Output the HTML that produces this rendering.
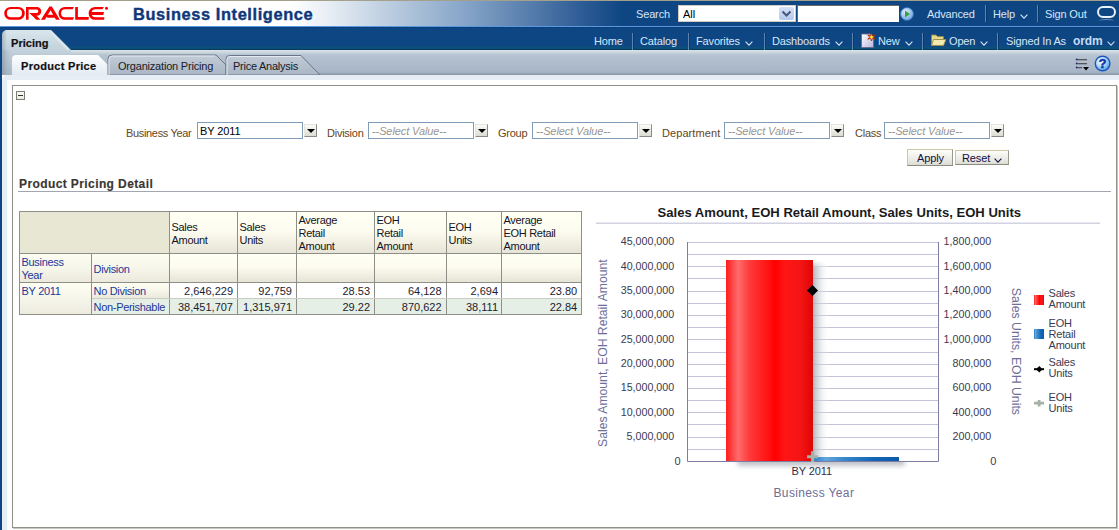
<!DOCTYPE html>
<html><head><meta charset="utf-8">
<style>
*{margin:0;padding:0;box-sizing:border-box}
html,body{width:1119px;height:530px;overflow:hidden;background:#fff;font-family:"Liberation Sans",sans-serif;font-size:11px;position:relative}
.a{position:absolute;white-space:nowrap;line-height:1}
#topline{left:0;top:0;width:1119px;height:1px;background:#a4a08c}
#hdr{left:0;top:1px;width:1119px;height:25px;background:linear-gradient(to right,#fff 0px,#fff 290px,#e6edf4 330px,#b4c7dc 400px,#86a5c8 465px,#5a80ae 525px,#2f5d96 580px,#0e4683 622px,#0e4683 1119px)}
#hline{left:0;top:26px;width:1119px;height:1px;background:#5b9ae0}
#nav{left:0;top:27px;width:1119px;height:23px;background:linear-gradient(to bottom,#0a3c74 0,#0e4683 1.5px,#0e4683 19px,#0b4f7c 20px,#0a4d76 22px,#083b62 22px,#083a60 23px)}
#tabbar{left:0;top:50px;width:1119px;height:25px;background:linear-gradient(to bottom,#dde5ea 0,#c6d2dc 3px,#b6c3d0 5px,#b0bdcc 12px,#a9b6c8 21px,#a2afc0 23px,#8e9aaa 24px,#8e9aaa 25px)}
#lstrip{left:0;top:27px;width:2px;height:503px;background:#0e4683}
#panel{left:2px;top:75px;width:1117px;height:455px;background:#e6edf5;border-top-left-radius:5px}
#inner{left:7px;top:80px;width:1112px;height:450px;background:#fff}
#box{left:12px;top:85px;width:1105px;height:443px;border:1px solid #8f9088;box-shadow:1px 1px 0 #c8c8c0}
.hl{color:#d6e6f7;font-size:11px;letter-spacing:-0.15px}
.sep{width:1px;background:#5d84b0;box-shadow:1px 0 0 #0a3a6a}
.cv{display:inline-block;vertical-align:baseline;margin-left:5px;position:relative;top:0.5px}
.chev{display:inline-block;width:4px;height:4px;border-right:1.5px solid currentColor;border-bottom:1.5px solid currentColor;transform:rotate(45deg);margin-left:7px;position:relative;top:-2px}
</style></head><body>
<div class="a" id="topline"></div>
<div class="a" id="hdr"></div>
<div class="a" id="hline"></div>
<div class="a" id="nav"></div>
<div class="a" id="tabbar"></div>
<div class="a" id="lstrip"></div>
<div class="a" id="panel"></div>
<div class="a" id="inner"></div>
<div class="a" id="box"></div>

<!-- ORACLE logo -->
<svg class="a" style="left:0;top:0" width="120" height="26" viewBox="0 0 120 26">
 <g fill="#f80000">
  <path fill-rule="evenodd" d="M10.65 6.9H18.35A6.45 6.45 0 0 1 18.35 19.8H10.65A6.45 6.45 0 0 1 10.65 6.9ZM10.98 9.1H17.93A4.07 4.07 0 0 1 17.93 17.25H10.98A4.07 4.07 0 0 1 10.98 9.1Z"/>
  <path fill-rule="evenodd" d="M26 6.9H36.85A4.45 4.45 0 0 1 36.85 15.8H32.4L29.7 12.9H28.6V19.8H26ZM28.6 9.4H36.65A1.75 1.75 0 0 1 36.65 12.9H28.6Z"/>
  <path d="M29.7 12.9H34L40.5 19.8H36.2Z"/>
  <path d="M40.9 19.8L49.4 6.6H51.8L59.9 19.8H56L50.6 10.3L44.9 19.8Z"/>
  <path d="M48.1 14.7H54.3L56.1 17.8H48.1A1.55 1.55 0 0 1 48.1 14.7Z"/>
  <path d="M74 6.9H64.95A6.45 6.45 0 0 0 64.95 19.8H73L74 17.25H65.08A3.97 3.97 0 0 1 65.08 9.3H72.6Z"/>
  <path d="M75.2 6.9H77.9V17.1H88.9L88.6 19.8H75.2Z"/>
  <path d="M103.9 6.9H95.05A6.45 6.45 0 0 0 95.05 19.8H104.1L104.4 17.25H95.5A3.97 3.97 0 0 1 95.5 9.3H102.4Z"/>
  <path d="M91 12H104L103.3 14.9H91Z"/>
  <circle cx="106.5" cy="8.25" r="1.5"/>
 </g>
</svg>
<div class="a" style="left:133px;top:6px;font-size:16.4px;font-weight:bold;color:#0f377a;letter-spacing:0.6px;-webkit-text-stroke:0.4px #0f377a">Business Intelligence</div>

<!-- search row -->
<div class="a hl" style="left:636px;top:9px">Search</div>
<div class="a" style="left:678px;top:5px;width:118px;height:17px;background:#fff;border:1px solid #cfcbbf"></div>
<div class="a" style="left:683px;top:9px;color:#000">All</div>
<div class="a" style="left:779px;top:7px;width:15px;height:13px;background:linear-gradient(#d4e0f6,#b6c8ec);border-radius:2px"></div>
<svg class="a" style="left:781px;top:9px" width="11" height="9"><path d="M1.5 2.5L5.5 6.5L9.5 2.5" fill="none" stroke="#485878" stroke-width="2"/></svg>
<div class="a" style="left:797px;top:5px;width:102px;height:17px;background:#fff;border-top:1px solid #6a6a6a;border-left:1px solid #6a6a6a"></div>
<svg class="a" style="left:900px;top:7px" width="15" height="14"><defs><radialGradient id="gb" cx="40%" cy="35%" r="70%"><stop offset="0" stop-color="#e6f3fd"/><stop offset="1" stop-color="#5e9edc"/></radialGradient></defs><circle cx="7" cy="7" r="6.5" fill="url(#gb)" stroke="#2e6bb5" stroke-width="0.8"/><path d="M5 3.5L10 7L5 10.5Z" fill="#3aa040"/></svg>
<div class="a hl" style="left:927px;top:9px">Advanced</div>
<div class="a sep" style="left:985px;top:5px;height:17px"></div>
<div class="a hl" style="left:993px;top:9px">Help<svg class="cv" width="8" height="5" viewBox="0 0 8 5"><path d="M0.6 0.7L4 4.1L7.4 0.7" fill="none" stroke="currentColor" stroke-width="1.1"/></svg></div>
<div class="a sep" style="left:1037px;top:5px;height:17px"></div>
<div class="a hl" style="left:1045px;top:9px">Sign Out</div>
<div class="a" style="left:1097px;top:6px;width:19px;height:12px;border:2px solid #e8f0fa;border-radius:6px"></div>
<div class="a" style="left:1099px;top:19px;width:15px;height:4px;border-top:1px solid rgba(200,220,240,0.5);border-radius:50%"></div>

<!-- nav row -->
<div class="a hl" style="left:594px;top:36px">Home</div>
<div class="a sep" style="left:632px;top:33px;height:17px"></div>
<div class="a hl" style="left:640px;top:36px">Catalog</div>
<div class="a sep" style="left:688px;top:33px;height:17px"></div>
<div class="a hl" style="left:696px;top:36px">Favorites<svg class="cv" width="8" height="5" viewBox="0 0 8 5"><path d="M0.6 0.7L4 4.1L7.4 0.7" fill="none" stroke="currentColor" stroke-width="1.1"/></svg></div>
<div class="a sep" style="left:764px;top:33px;height:17px"></div>
<div class="a hl" style="left:772px;top:36px">Dashboards<svg class="cv" width="8" height="5" viewBox="0 0 8 5"><path d="M0.6 0.7L4 4.1L7.4 0.7" fill="none" stroke="currentColor" stroke-width="1.1"/></svg></div>
<div class="a sep" style="left:852px;top:33px;height:17px"></div>
<svg class="a" style="left:860px;top:32px" width="17" height="17" viewBox="0 0 17 17"><defs><linearGradient id="pg" x1="0" y1="0" x2="1" y2="1"><stop offset="0" stop-color="#ffffff"/><stop offset="1" stop-color="#b8b4dc"/></linearGradient></defs><path d="M1.5 2H10.5L13.5 5V15.5H1.5Z" fill="url(#pg)" stroke="#6a6890" stroke-width="0.9"/><path d="M11.5 1.2L12.4 3.9L15.2 3L13.3 5.1L15.2 7.2L12.4 6.3L11.5 9L10.6 6.3L7.8 7.2L9.7 5.1L7.8 3L10.6 3.9Z" fill="#ffe040" stroke="#b02800" stroke-width="0.9" stroke-linejoin="round"/></svg>
<div class="a hl" style="left:878px;top:36px">New<svg class="cv" width="8" height="5" viewBox="0 0 8 5"><path d="M0.6 0.7L4 4.1L7.4 0.7" fill="none" stroke="currentColor" stroke-width="1.1"/></svg></div>
<div class="a sep" style="left:922px;top:33px;height:17px"></div>
<svg class="a" style="left:930px;top:33px" width="17" height="14"><path d="M1.5 2H6L7.5 3.5H13.5V12.5H1.5Z" fill="#e4d890" stroke="#9a8840" stroke-width="0.9"/><path d="M3.5 6.5H16L13.5 12.5H1.5Z" fill="#f2eab0" stroke="#9a8840" stroke-width="0.9"/></svg>
<div class="a hl" style="left:949px;top:36px">Open<svg class="cv" width="8" height="5" viewBox="0 0 8 5"><path d="M0.6 0.7L4 4.1L7.4 0.7" fill="none" stroke="currentColor" stroke-width="1.1"/></svg></div>
<div class="a sep" style="left:997px;top:33px;height:17px"></div>
<div class="a hl" style="left:1006px;top:36px">Signed In As</div>
<div class="a hl" style="left:1073px;top:35px;font-weight:bold;font-size:12px;color:#c6dcf2">ordm<svg class="cv" width="8" height="5" viewBox="0 0 8 5"><path d="M0.6 0.7L4 4.1L7.4 0.7" fill="none" stroke="currentColor" stroke-width="1.1"/></svg></div>


<!-- tabs -->
<svg class="a" style="left:0;top:26px" width="1119" height="49" viewBox="0 26 1119 49">
 <defs>
  <linearGradient id="tg1" x1="0" y1="0" x2="0" y2="1"><stop offset="0" stop-color="#dae6ec"/><stop offset="0.3" stop-color="#c9d8e0"/><stop offset="0.6" stop-color="#bccbd6"/><stop offset="1" stop-color="#aab9c6"/></linearGradient>
  <linearGradient id="tg2" x1="0" y1="0" x2="0" y2="1"><stop offset="0" stop-color="#ffffff"/><stop offset="0.5" stop-color="#f0f4f8"/><stop offset="1" stop-color="#e3eaf3"/></linearGradient>
  <linearGradient id="tg3" x1="0" y1="0" x2="0" y2="1"><stop offset="0" stop-color="#c2ccd8"/><stop offset="1" stop-color="#aab6c4"/></linearGradient>
 </defs>
 <path d="M2 75V35A5 5 0 0 1 7 30H51L71 50V54.5H12V75Z" fill="url(#tg1)"/><path d="M50.5 31.5L68.5 50" stroke="#e2eaee" stroke-width="2.5" opacity="0.75"/>
 <linearGradient id="lsh" x1="0" y1="0" x2="1" y2="0"><stop offset="0" stop-color="#8898a8" stop-opacity="0.55"/><stop offset="1" stop-color="#8898a8" stop-opacity="0"/></linearGradient><path d="M2 75V35A5 5 0 0 1 7 30V75Z" fill="url(#lsh)"/><rect x="2" y="50" width="10" height="25" fill="url(#lsh)" opacity="0.6"/>
 <path d="M12 75V59A4 4 0 0 1 16 55H98L118 75Z" fill="url(#tg2)"/>
 <path d="M108 75V59A4 4 0 0 1 112 55H216L226 65V75Z" fill="url(#tg3)" stroke="#6b7787" stroke-width="1"/>
 <path d="M109 75V59.5A3.5 3.5 0 0 1 112.5 56H215" fill="none" stroke="#e4eaf0" stroke-width="1"/>
 <path d="M226 75V59A3.5 3.5 0 0 1 229.5 55.5H301L320 75Z" fill="url(#tg3)" stroke="#6b7787" stroke-width="1"/>
 <path d="M227 75V59.5A3 3 0 0 1 230 56.5H300.5" fill="none" stroke="#e4eaf0" stroke-width="1"/>
</svg>
<div class="a" style="left:11px;top:38px;font-size:11px;font-weight:bold;color:#111;letter-spacing:0.05px;-webkit-text-stroke:0.2px #111">Pricing</div>
<div class="a" style="left:21px;top:61px;font-size:11px;font-weight:bold;color:#111;letter-spacing:0.3px;-webkit-text-stroke:0.2px #111">Product Price</div>
<div class="a" style="left:118px;top:61px;font-size:11px;color:#1a1a28;letter-spacing:-0.2px">Organization Pricing</div>
<div class="a" style="left:233px;top:61px;font-size:11px;color:#1a1a28;letter-spacing:-0.25px">Price Analysis</div>
<svg class="a" style="left:1075px;top:57px" width="16" height="15"><g fill="#333"><rect x="3" y="2" width="9" height="1.3" fill="#555"/><rect x="3" y="6" width="9" height="1.3" fill="#555"/><rect x="3" y="10" width="4" height="1.3" fill="#555"/></g><circle cx="1.8" cy="2.5" r="1.1" fill="#2a2a80"/><circle cx="1.8" cy="6.5" r="1.1" fill="#2a2a80"/><circle cx="1.8" cy="10.5" r="1.1" fill="#2a2a80"/><path d="M8 10H14L11 13.5Z" fill="#000"/></svg>
<svg class="a" style="left:1094px;top:55px" width="18" height="18"><defs><radialGradient id="hg" cx="40%" cy="35%" r="70%"><stop offset="0" stop-color="#f6fbff"/><stop offset="0.45" stop-color="#c0e0fa"/><stop offset="1" stop-color="#3f8fe0"/></radialGradient></defs><circle cx="8.6" cy="8.5" r="7.3" fill="url(#hg)" stroke="#1a58c0" stroke-width="1.4"/><text x="8.6" y="12.9" text-anchor="middle" font-family="Liberation Sans" font-weight="bold" font-size="12.5" fill="#0a3aa8" stroke="#0a3aa8" stroke-width="0.6">?</text></svg>

<!-- content -->
<div class="a" style="left:16px;top:91px;width:9px;height:9px;border:1px solid #7c7c74;background:linear-gradient(#fafaf4,#ecece2)"></div>
<div class="a" style="left:18px;top:95px;width:5px;height:1px;background:#333"></div>

<style>
.pl{color:#65451a;letter-spacing:-0.25px}
.pin{height:17px;border:1px solid #7f9db9;background:#fff}
.pv{color:#9a9590;font-style:italic;letter-spacing:-0.1px}
.dd{width:13px;height:13px;background:linear-gradient(#fbfbf8,#dcdcd4);border:1px solid;border-color:#e6e6e0 #8a8a84 #8a8a84 #e6e6e0}
.dd:after{content:"";position:absolute;left:1.5px;top:3.5px;border-left:4px solid transparent;border-right:4px solid transparent;border-top:4.5px solid #000}
.btn{border:1px solid;border-color:#cbc7a6 #9a9a8a #8a8a7e #cbc7a6;background:linear-gradient(#fdfdfa,#e9e9e2 70%,#dcdcd4)}
</style>
<div class="a pl" style="left:126px;top:128px;letter-spacing:-0.33px">Business Year</div>
<div class="a pin" style="left:197px;top:122px;width:106px"></div>
<div class="a" style="left:200px;top:126px;color:#000;letter-spacing:-0.1px">BY 2011</div>
<div class="a dd" style="left:304px;top:124px"></div>

<div class="a pl" style="left:327px;top:128px">Division</div>
<div class="a pin" style="left:368px;top:122px;width:106px"></div>
<div class="a pv" style="left:372px;top:126px">--Select Value--</div>
<div class="a dd" style="left:475px;top:124px"></div>

<div class="a pl" style="left:498px;top:128px">Group</div>
<div class="a pin" style="left:532px;top:122px;width:106px"></div>
<div class="a pv" style="left:536px;top:126px">--Select Value--</div>
<div class="a dd" style="left:639px;top:124px"></div>

<div class="a pl" style="left:662px;top:128px;letter-spacing:0.08px">Department</div>
<div class="a pin" style="left:724px;top:122px;width:106px"></div>
<div class="a pv" style="left:728px;top:126px">--Select Value--</div>
<div class="a dd" style="left:831px;top:124px"></div>

<div class="a pl" style="left:855px;top:128px">Class</div>
<div class="a pin" style="left:884px;top:122px;width:106px"></div>
<div class="a pv" style="left:888px;top:126px">--Select Value--</div>
<div class="a dd" style="left:991px;top:124px"></div>

<div class="a btn" style="left:907px;top:149px;width:46px;height:17px"></div>
<div class="a" style="left:917px;top:153px;color:#10104a;letter-spacing:-0.1px">Apply</div>
<div class="a btn" style="left:955px;top:150px;width:54px;height:15px"></div>
<div class="a" style="left:962px;top:153px;color:#10104a;letter-spacing:-0.1px">Reset<svg class="cv" width="8" height="5" viewBox="0 0 8 5" style="margin-left:4px"><path d="M0.6 0.7L4 4.1L7.4 0.7" fill="none" stroke="currentColor" stroke-width="1.1"/></svg></div>

<div class="a" style="left:19px;top:178px;font-size:12px;font-weight:bold;color:#3a3632;letter-spacing:0.4px;-webkit-text-stroke:0.15px #3a3632">Product Pricing Detail</div>
<div class="a" style="left:18px;top:191px;width:1093px;height:1px;background:#a2a6b2"></div>

<!-- table -->
<style>.tx{color:#141424;letter-spacing:-0.3px}.rh{color:#1c3898;letter-spacing:-0.3px}.nm{color:#1c1c30;text-align:right}</style>
<div class="a" style="left:19px;top:211px;width:563px;height:104px;background:#8e9088"></div>
<div class="a" style="left:20px;top:212px;width:149px;height:41px;background:#e8e7d4"></div>
<div class="a" style="left:170px;top:212px;width:67px;height:41px;background:linear-gradient(#fffff3 0%,#fdfcf0 45%,#f1efe2 75%,#e6e4d6 100%)"></div>
<div class="a" style="left:238px;top:212px;width:58px;height:41px;background:linear-gradient(#fffff3 0%,#fdfcf0 45%,#f1efe2 75%,#e6e4d6 100%)"></div>
<div class="a" style="left:297px;top:212px;width:77px;height:41px;background:linear-gradient(#fffff3 0%,#fdfcf0 45%,#f1efe2 75%,#e6e4d6 100%)"></div>
<div class="a" style="left:375px;top:212px;width:71px;height:41px;background:linear-gradient(#fffff3 0%,#fdfcf0 45%,#f1efe2 75%,#e6e4d6 100%)"></div>
<div class="a" style="left:447px;top:212px;width:54px;height:41px;background:linear-gradient(#fffff3 0%,#fdfcf0 45%,#f1efe2 75%,#e6e4d6 100%)"></div>
<div class="a" style="left:502px;top:212px;width:79px;height:41px;background:linear-gradient(#fffff3 0%,#fdfcf0 45%,#f1efe2 75%,#e6e4d6 100%)"></div>
<div class="a" style="left:20px;top:254px;width:71px;height:28px;background:linear-gradient(#fdfdf2 0%,#f7f6ea 50%,#ebe9dc 100%)"></div>
<div class="a" style="left:92px;top:254px;width:77px;height:28px;background:linear-gradient(#fdfdf2 0%,#f7f6ea 50%,#ebe9dc 100%)"></div>
<div class="a" style="left:170px;top:254px;width:67px;height:28px;background:linear-gradient(#fffff3 0%,#fdfcf0 45%,#f1efe2 75%,#e6e4d6 100%)"></div>
<div class="a" style="left:238px;top:254px;width:58px;height:28px;background:linear-gradient(#fffff3 0%,#fdfcf0 45%,#f1efe2 75%,#e6e4d6 100%)"></div>
<div class="a" style="left:297px;top:254px;width:77px;height:28px;background:linear-gradient(#fffff3 0%,#fdfcf0 45%,#f1efe2 75%,#e6e4d6 100%)"></div>
<div class="a" style="left:375px;top:254px;width:71px;height:28px;background:linear-gradient(#fffff3 0%,#fdfcf0 45%,#f1efe2 75%,#e6e4d6 100%)"></div>
<div class="a" style="left:447px;top:254px;width:54px;height:28px;background:linear-gradient(#fffff3 0%,#fdfcf0 45%,#f1efe2 75%,#e6e4d6 100%)"></div>
<div class="a" style="left:502px;top:254px;width:79px;height:28px;background:linear-gradient(#fffff3 0%,#fdfcf0 45%,#f1efe2 75%,#e6e4d6 100%)"></div>
<div class="a" style="left:20px;top:283px;width:71px;height:31px;background:linear-gradient(#fdfdf2 0%,#f8f7ec 40%,#ecebde 100%)"></div>
<div class="a" style="left:92px;top:283px;width:77px;height:15px;background:linear-gradient(#fdfdf2 0%,#f7f6ea 50%,#ebe9dc 100%)"></div>
<div class="a" style="left:92px;top:298px;width:77px;height:16px;background:#c9cdc4"></div>
<div class="a" style="left:92px;top:299px;width:77px;height:15px;background:#e6efe6"></div>
<div class="a" style="left:170px;top:283px;width:67px;height:15px;background:#ffffff"></div>
<div class="a" style="left:169px;top:298px;width:68px;height:1px;background:#c9cdc4"></div>
<div class="a" style="left:170px;top:299px;width:67px;height:15px;background:#e6efe6"></div>
<div class="a" style="left:238px;top:283px;width:58px;height:15px;background:#ffffff"></div>
<div class="a" style="left:237px;top:298px;width:59px;height:1px;background:#c9cdc4"></div>
<div class="a" style="left:238px;top:299px;width:58px;height:15px;background:#e6efe6"></div>
<div class="a" style="left:297px;top:283px;width:77px;height:15px;background:#ffffff"></div>
<div class="a" style="left:296px;top:298px;width:78px;height:1px;background:#c9cdc4"></div>
<div class="a" style="left:297px;top:299px;width:77px;height:15px;background:#e6efe6"></div>
<div class="a" style="left:375px;top:283px;width:71px;height:15px;background:#ffffff"></div>
<div class="a" style="left:374px;top:298px;width:72px;height:1px;background:#c9cdc4"></div>
<div class="a" style="left:375px;top:299px;width:71px;height:15px;background:#e6efe6"></div>
<div class="a" style="left:447px;top:283px;width:54px;height:15px;background:#ffffff"></div>
<div class="a" style="left:446px;top:298px;width:55px;height:1px;background:#c9cdc4"></div>
<div class="a" style="left:447px;top:299px;width:54px;height:15px;background:#e6efe6"></div>
<div class="a" style="left:502px;top:283px;width:79px;height:15px;background:#ffffff"></div>
<div class="a" style="left:501px;top:298px;width:80px;height:1px;background:#c9cdc4"></div>
<div class="a" style="left:502px;top:299px;width:79px;height:15px;background:#e6efe6"></div>
<div class="a tx" style="left:171.5px;top:221.7px;">Sales</div>
<div class="a tx" style="left:171.5px;top:234.7px;">Amount</div>
<div class="a tx" style="left:239.5px;top:221.7px;">Sales</div>
<div class="a tx" style="left:239.5px;top:234.7px;">Units</div>
<div class="a tx" style="left:298.5px;top:214.7px;">Average</div>
<div class="a tx" style="left:298.5px;top:227.7px;">Retail</div>
<div class="a tx" style="left:298.5px;top:240.7px;">Amount</div>
<div class="a tx" style="left:376.5px;top:214.7px;">EOH</div>
<div class="a tx" style="left:376.5px;top:227.7px;">Retail</div>
<div class="a tx" style="left:376.5px;top:240.7px;">Amount</div>
<div class="a tx" style="left:448.5px;top:221.7px;">EOH</div>
<div class="a tx" style="left:448.5px;top:234.7px;">Units</div>
<div class="a tx" style="left:503.5px;top:214.7px;">Average</div>
<div class="a tx" style="left:503.5px;top:227.7px;">EOH Retail</div>
<div class="a tx" style="left:503.5px;top:240.7px;">Amount</div>
<div class="a rh" style="left:21.5px;top:256.7px;">Business</div>
<div class="a rh" style="left:21.5px;top:269.7px;">Year</div>
<div class="a rh" style="left:93.5px;top:263.7px;">Division</div>
<div class="a rh" style="left:21.5px;top:286.2px;">BY 2011</div>
<div class="a rh" style="left:93.5px;top:286.2px;">No Division</div>
<div class="a rh" style="left:93.5px;top:301.7px;">Non-Perishable</div>
<div class="a nm" style="left:153.0px;top:286.2px;width:80px">2,646,229</div>
<div class="a nm" style="left:153.0px;top:301.7px;width:80px">38,451,707</div>
<div class="a nm" style="left:212.0px;top:286.2px;width:80px">92,759</div>
<div class="a nm" style="left:212.0px;top:301.7px;width:80px">1,315,971</div>
<div class="a nm" style="left:290.0px;top:286.2px;width:80px">28.53</div>
<div class="a nm" style="left:290.0px;top:301.7px;width:80px">29.22</div>
<div class="a nm" style="left:361.6px;top:286.2px;width:80px">64,128</div>
<div class="a nm" style="left:361.6px;top:301.7px;width:80px">870,622</div>
<div class="a nm" style="left:418.0px;top:286.2px;width:80px">2,694</div>
<div class="a nm" style="left:418.0px;top:301.7px;width:80px">38,111</div>
<div class="a nm" style="left:497.2px;top:286.2px;width:80px">23.80</div>
<div class="a nm" style="left:497.2px;top:301.7px;width:80px">22.84</div>
<!-- chart -->
<svg class="a" style="left:590px;top:195px" width="529" height="320" viewBox="590 195 529 320">
<defs>
<linearGradient id="red" x1="0" y1="0" x2="1" y2="0">
 <stop offset="0" stop-color="#ff1c1c"/><stop offset="0.14" stop-color="#ff6c6c"/><stop offset="0.27" stop-color="#ff3a3a"/><stop offset="0.5" stop-color="#ff1010"/><stop offset="0.56" stop-color="#ff0000"/><stop offset="0.68" stop-color="#ff1616"/><stop offset="0.86" stop-color="#f41414"/><stop offset="1" stop-color="#de0606"/>
</linearGradient>
<linearGradient id="blue" x1="0" y1="0" x2="1" y2="0">
 <stop offset="0" stop-color="#2a7cc8"/><stop offset="0.15" stop-color="#62a6dc"/><stop offset="0.35" stop-color="#3a88cc"/><stop offset="0.7" stop-color="#1466b4"/><stop offset="1" stop-color="#0c5aa8"/>
</linearGradient>
<linearGradient id="shr" x1="0" y1="0" x2="1" y2="0"><stop offset="0" stop-color="#9ca2ac" stop-opacity="0.75"/><stop offset="0.5" stop-color="#c0c4cc" stop-opacity="0.45"/><stop offset="1" stop-color="#ffffff" stop-opacity="0"/></linearGradient>
<linearGradient id="shb" x1="0" y1="0" x2="0" y2="1"><stop offset="0" stop-color="#9ca2ac" stop-opacity="0.7"/><stop offset="0.5" stop-color="#c0c4cc" stop-opacity="0.4"/><stop offset="1" stop-color="#ffffff" stop-opacity="0"/></linearGradient>
<filter id="blur2" x="-20%" y="-100%" width="140%" height="300%"><feGaussianBlur stdDeviation="2.6"/></filter>
</defs>
<text x="839.3" y="216.7" text-anchor="middle" font-family="Liberation Sans" font-weight="bold" font-size="13" fill="#1a1a1a" textLength="363.5" lengthAdjust="spacingAndGlyphs">Sales Amount, EOH Retail Amount, Sales Units, EOH Units</text>
<rect x="596" y="222.5" width="504" height="1.5" fill="#d2d2e2"/>
<line x1="688" y1="242.5" x2="938" y2="242.5" stroke="#c2c3d8" stroke-width="1"/>
<line x1="688" y1="254.5" x2="938" y2="254.5" stroke="#c2c3d8" stroke-width="1"/>
<line x1="688" y1="266.5" x2="938" y2="266.5" stroke="#c2c3d8" stroke-width="1"/>
<line x1="688" y1="278.5" x2="938" y2="278.5" stroke="#c2c3d8" stroke-width="1"/>
<line x1="688" y1="291.5" x2="938" y2="291.5" stroke="#c2c3d8" stroke-width="1"/>
<line x1="688" y1="303.5" x2="938" y2="303.5" stroke="#c2c3d8" stroke-width="1"/>
<line x1="688" y1="315.5" x2="938" y2="315.5" stroke="#c2c3d8" stroke-width="1"/>
<line x1="688" y1="327.5" x2="938" y2="327.5" stroke="#c2c3d8" stroke-width="1"/>
<line x1="688" y1="339.5" x2="938" y2="339.5" stroke="#c2c3d8" stroke-width="1"/>
<line x1="688" y1="352.5" x2="938" y2="352.5" stroke="#c2c3d8" stroke-width="1"/>
<line x1="688" y1="364.5" x2="938" y2="364.5" stroke="#c2c3d8" stroke-width="1"/>
<line x1="688" y1="376.5" x2="938" y2="376.5" stroke="#c2c3d8" stroke-width="1"/>
<line x1="688" y1="388.5" x2="938" y2="388.5" stroke="#c2c3d8" stroke-width="1"/>
<line x1="688" y1="400.5" x2="938" y2="400.5" stroke="#c2c3d8" stroke-width="1"/>
<line x1="688" y1="412.5" x2="938" y2="412.5" stroke="#c2c3d8" stroke-width="1"/>
<line x1="688" y1="424.5" x2="938" y2="424.5" stroke="#c2c3d8" stroke-width="1"/>
<line x1="688" y1="437.5" x2="938" y2="437.5" stroke="#c2c3d8" stroke-width="1"/>
<line x1="688" y1="449.5" x2="938" y2="449.5" stroke="#c2c3d8" stroke-width="1"/>
<line x1="688" y1="461.5" x2="938" y2="461.5" stroke="#c2c3d8" stroke-width="1"/>
<linearGradient id="shr2" x1="0" y1="0" x2="1" y2="0"><stop offset="0" stop-color="#a8adb5" stop-opacity="0.85"/><stop offset="0.35" stop-color="#c4c8ce" stop-opacity="0.6"/><stop offset="1" stop-color="#ffffff" stop-opacity="0"/></linearGradient>
<linearGradient id="shv" x1="0" y1="0" x2="0" y2="1"><stop offset="0" stop-color="#fff" stop-opacity="1"/><stop offset="1" stop-color="#fff" stop-opacity="0"/></linearGradient>
<linearGradient id="shb2" x1="0" y1="0" x2="0" y2="1"><stop offset="0" stop-color="#b4b8c0" stop-opacity="0.8"/><stop offset="0.4" stop-color="#ccd0d6" stop-opacity="0.5"/><stop offset="1" stop-color="#ffffff" stop-opacity="0"/></linearGradient>
<rect x="813" y="261" width="16" height="200" fill="url(#shr2)"/>
<rect x="813" y="260" width="16" height="8" fill="url(#shv)"/>
<clipPath id="cpb"><rect x="600" y="461.5" width="400" height="20"/></clipPath><g clip-path="url(#cpb)"><rect x="737" y="457" width="168" height="9" rx="4" fill="#8c939c" opacity="0.55" filter="url(#blur2)"/></g>
<rect x="726" y="260" width="87" height="201" fill="url(#red)"/>
<rect x="813" y="457" width="86" height="4" fill="url(#blue)"/>
<path d="M687.5 242V461.5H938.5V242" fill="none" stroke="#7c7ca4" stroke-width="1"/>
<path d="M812.5 285L818 290.5L812.5 296L807 290.5Z" fill="#000"/>
<path d="M811 451.2H814.2V455.2H818V458.2H814.2V462H811V458.2H807V455.2H811Z" fill="#a4b2a8"/>
<text x="674.2" y="245.4" text-anchor="end" font-family="Liberation Sans" font-size="11" fill="#3a3a52" textLength="53.5" lengthAdjust="spacingAndGlyphs">45,000,000</text>
<text x="991.2" y="245.4" text-anchor="end" font-family="Liberation Sans" font-size="11" fill="#3a3a52" textLength="47.6" lengthAdjust="spacingAndGlyphs">1,800,000</text>
<text x="674.2" y="269.7" text-anchor="end" font-family="Liberation Sans" font-size="11" fill="#3a3a52" textLength="53.5" lengthAdjust="spacingAndGlyphs">40,000,000</text>
<text x="991.2" y="269.7" text-anchor="end" font-family="Liberation Sans" font-size="11" fill="#3a3a52" textLength="47.6" lengthAdjust="spacingAndGlyphs">1,600,000</text>
<text x="674.2" y="294.1" text-anchor="end" font-family="Liberation Sans" font-size="11" fill="#3a3a52" textLength="53.5" lengthAdjust="spacingAndGlyphs">35,000,000</text>
<text x="991.2" y="294.1" text-anchor="end" font-family="Liberation Sans" font-size="11" fill="#3a3a52" textLength="47.6" lengthAdjust="spacingAndGlyphs">1,400,000</text>
<text x="674.2" y="318.4" text-anchor="end" font-family="Liberation Sans" font-size="11" fill="#3a3a52" textLength="53.5" lengthAdjust="spacingAndGlyphs">30,000,000</text>
<text x="991.2" y="318.4" text-anchor="end" font-family="Liberation Sans" font-size="11" fill="#3a3a52" textLength="47.6" lengthAdjust="spacingAndGlyphs">1,200,000</text>
<text x="674.2" y="342.7" text-anchor="end" font-family="Liberation Sans" font-size="11" fill="#3a3a52" textLength="53.5" lengthAdjust="spacingAndGlyphs">25,000,000</text>
<text x="991.2" y="342.7" text-anchor="end" font-family="Liberation Sans" font-size="11" fill="#3a3a52" textLength="47.6" lengthAdjust="spacingAndGlyphs">1,000,000</text>
<text x="674.2" y="367.1" text-anchor="end" font-family="Liberation Sans" font-size="11" fill="#3a3a52" textLength="53.5" lengthAdjust="spacingAndGlyphs">20,000,000</text>
<text x="991.2" y="367.1" text-anchor="end" font-family="Liberation Sans" font-size="11" fill="#3a3a52" textLength="38.7" lengthAdjust="spacingAndGlyphs">800,000</text>
<text x="674.2" y="391.4" text-anchor="end" font-family="Liberation Sans" font-size="11" fill="#3a3a52" textLength="53.5" lengthAdjust="spacingAndGlyphs">15,000,000</text>
<text x="991.2" y="391.4" text-anchor="end" font-family="Liberation Sans" font-size="11" fill="#3a3a52" textLength="38.7" lengthAdjust="spacingAndGlyphs">600,000</text>
<text x="674.2" y="415.7" text-anchor="end" font-family="Liberation Sans" font-size="11" fill="#3a3a52" textLength="53.5" lengthAdjust="spacingAndGlyphs">10,000,000</text>
<text x="991.2" y="415.7" text-anchor="end" font-family="Liberation Sans" font-size="11" fill="#3a3a52" textLength="38.7" lengthAdjust="spacingAndGlyphs">400,000</text>
<text x="674.2" y="440.1" text-anchor="end" font-family="Liberation Sans" font-size="11" fill="#3a3a52" textLength="47.6" lengthAdjust="spacingAndGlyphs">5,000,000</text>
<text x="991.2" y="440.1" text-anchor="end" font-family="Liberation Sans" font-size="11" fill="#3a3a52" textLength="38.7" lengthAdjust="spacingAndGlyphs">200,000</text>
<text x="680.5" y="464.6" text-anchor="end" font-family="Liberation Sans" font-size="11" fill="#3a3a52">0</text>
<text x="996.3" y="464.6" text-anchor="end" font-family="Liberation Sans" font-size="11" fill="#3a3a52">0</text>
<text x="811.7" y="474.8" text-anchor="middle" font-family="Liberation Sans" font-size="11" fill="#30304a" textLength="40.6" lengthAdjust="spacing">BY 2011</text>
<text x="813.7" y="496.7" text-anchor="middle" font-family="Liberation Sans" font-size="12" fill="#6e6e98" textLength="80.4" lengthAdjust="spacing">Business Year</text>
<text transform="translate(607,353.1) rotate(-90)" x="0" y="0" text-anchor="middle" font-family="Liberation Sans" font-size="12.2" fill="#6e6e98">Sales Amount, EOH Retail Amount</text>
<text transform="translate(1012.2,351.4) rotate(90)" x="0" y="0" text-anchor="middle" font-family="Liberation Sans" font-size="12.3" fill="#6e6e98">Sales Units, EOH Units</text>
<rect x="1034" y="295" width="10" height="10" fill="url(#red)"/>
<rect x="1034" y="329" width="10" height="10" fill="url(#blue)"/>
<rect x="1034" y="368.2" width="10" height="2" fill="#000"/><path d="M1039.3 366L1042.5 369.2L1039.3 372.5L1036 369.2Z" fill="#000"/>
<path d="M1034 401.7H1044V404.5H1040.5V406.5H1037.7V404.5H1034Z" fill="#a4b2a8"/><rect x="1037.7" y="400" width="2.8" height="2" fill="#a4b2a8"/>
<text x="1048.5" y="296.8" font-family="Liberation Sans" font-size="11" fill="#3a3a52" letter-spacing="-0.2">Sales</text>
<text x="1048.5" y="307.7" font-family="Liberation Sans" font-size="11" fill="#3a3a52" letter-spacing="-0.2">Amount</text>
<text x="1048.5" y="326.8" font-family="Liberation Sans" font-size="11" fill="#3a3a52" letter-spacing="-0.2">EOH</text>
<text x="1048.5" y="337.7" font-family="Liberation Sans" font-size="11" fill="#3a3a52" letter-spacing="-0.2">Retail</text>
<text x="1048.5" y="348.6" font-family="Liberation Sans" font-size="11" fill="#3a3a52" letter-spacing="-0.2">Amount</text>
<text x="1048.5" y="366" font-family="Liberation Sans" font-size="11" fill="#3a3a52" letter-spacing="-0.2">Sales</text>
<text x="1048.5" y="376.6" font-family="Liberation Sans" font-size="11" fill="#3a3a52" letter-spacing="-0.2">Units</text>
<text x="1048.5" y="401" font-family="Liberation Sans" font-size="11" fill="#3a3a52" letter-spacing="-0.2">EOH</text>
<text x="1048.5" y="411.6" font-family="Liberation Sans" font-size="11" fill="#3a3a52" letter-spacing="-0.2">Units</text>
</svg>
</body></html>
